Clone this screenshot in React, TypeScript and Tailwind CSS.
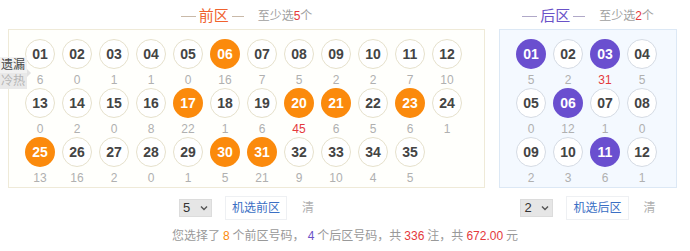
const front: [string, number, boolean][] = [
  ["01", 6, false], ["02", 0, false], ["03", 1, false], ["04", 1, false], ["05", 0, false], ["06", 16, true],
  ["07", 7, false], ["08", 5, false], ["09", 2, false], ["10", 2, false], ["11", 7, false], ["12", 10, false],
  ["13", 0, false], ["14", 2, false], ["15", 0, false], ["16", 8, false], ["17", 22, true], ["18", 1, false],
  ["19", 6, false], ["20", 45, true], ["21", 6, true], ["22", 5, false], ["23", 6, true], ["24", 1, false],
  ["25", 13, true], ["26", 16, false], ["27", 2, false], ["28", 0, false], ["29", 1, false], ["30", 5, true],
  ["31", 21, true], ["32", 9, false], ["33", 10, false], ["34", 4, false], ["35", 5, false],
];

const back: [string, number, boolean][] = [
  ["01", 5, true], ["02", 2, false], ["03", 31, true], ["04", 5, false],
  ["05", 0, false], ["06", 12, true], ["07", 1, false], ["08", 0, false],
  ["09", 2, false], ["10", 3, false], ["11", 6, true], ["12", 1, false],
];

const font = "font-['Liberation_Sans','Noto_Sans_CJK_SC',sans-serif]";

function Ball({ num, miss, on, kind }: { num: string; miss: number; on: boolean; kind: "front" | "back" }) {
  const onCls = kind === "front" ? "bg-[#fb8a0c] text-white" : "bg-[#6a4fcf] text-white";
  const offCls =
    kind === "front"
      ? "bg-white border border-[#e6e1cc] text-[#444]"
      : "bg-white border border-[#d5dbe4] text-[#444]";
  return (
    <div className="flex flex-col items-center">
      <div
        className={`w-[30px] h-[30px] rounded-full flex items-center justify-center text-[14px] font-bold ${
          on ? onCls : offCls
        }`}
      >
        {num}
      </div>
      <div
        className={`h-[19px] pt-[3px] leading-[16px] text-[12px] ${
          miss > 30 ? "text-[#e4393c]" : "text-[#b0b0b0]"
        }`}
      >
        {miss}
      </div>
    </div>
  );
}

function Title({ name, min, color, line }: { name: string; min: number; color: string; line: string }) {
  return (
    <div className="h-[29px] pt-[3px] flex items-center justify-center">
      <span className={`w-[15px] h-px ${line}`} />
      <span className={`mx-[3px] text-[15px] ${color}`}>{name}</span>
      <span className={`w-[12px] h-px ${line}`} />
      <span className="ml-[14px] text-[12px] text-[#a0a0a0]">
        至少选<span className="text-[#e4393c]">{min}</span>个
      </span>
    </div>
  );
}

function Controls({ value, label }: { value: number; label: string }) {
  return (
    <div className="mt-[8px] h-[24px] flex items-center justify-center">
      <div className="w-[33px] h-[18px] bg-[#e6e6e6] border border-[#dcdcdc] flex items-center justify-between px-[3px] text-[13px] text-[#333]">
        <span>{value}</span>
        <svg width="8" height="6" viewBox="0 0 8 6">
          <path d="M1 1.5 L4 4.5 L7 1.5" fill="none" stroke="#555" strokeWidth="1.4" />
        </svg>
      </div>
      <div className="ml-[13px] h-[24px] px-[6px] bg-white border border-[#eef0f3] flex items-center text-[12px] text-[#3a6fc4]">
        {label}
      </div>
      <div className="ml-[15px] text-[12px] text-[#b0b0b0]">清</div>
    </div>
  );
}

export default function App() {
  return (
    <div className={`relative w-[690px] h-[251px] bg-white overflow-hidden ${font}`}>
      <div className="flex pl-[8px] gap-[14px]">
        {/* 前区 */}
        <div className="w-[477px]">
          <Title name="前区" min={5} color="text-[#f0622e]" line="bg-[#c9b9a8]" />
          <div className="h-[159px] border border-[#efead8] bg-[#fffffc] pl-[16px] pt-[9px]">
            <div className="grid grid-cols-[repeat(12,30px)] gap-x-[7px]">
              {front.map(([n, m, on]) => (
                <Ball key={n} num={n} miss={m} on={on} kind="front" />
              ))}
            </div>
          </div>
          <Controls value={5} label="机选前区" />
        </div>

        {/* 后区 */}
        <div className="w-[178px]">
          <Title name="后区" min={2} color="text-[#6a52c8]" line="bg-[#b0a8c8]" />
          <div className="h-[159px] border border-[#dce8f5] bg-[#f4f9ff] pl-[16px] pt-[9px]">
            <div className="grid grid-cols-[repeat(4,30px)] gap-x-[7px]">
              {back.map(([n, m, on]) => (
                <Ball key={n} num={n} miss={m} on={on} kind="back" />
              ))}
            </div>
          </div>
          <Controls value={2} label="机选后区" />
        </div>
      </div>

      <div className="mt-[6px] h-[20px] flex items-center justify-center text-[12px] text-[#999]">
        您选择了 <span className="text-[#fb8a0c] mx-[3px]">8</span> 个前区号码，
        <span className="text-[#6a52c8] mx-[3px]">4</span> 个后区号码，共
        <span className="text-[#e4393c] mx-[3px]">336</span> 注，共
        <span className="text-[#e4393c] mx-[3px]">672.00</span> 元
      </div>

      {/* side tab */}
      <div className="absolute left-0 top-[57px] w-[27px] text-[12px]">
        <div className="relative h-[16px] leading-[16px] pl-[1px] bg-[#f2f2f2] text-[#444]">
          遗漏
          <span className="absolute right-[-4px] top-[12px] w-0 h-0 border-l-[4px] border-l-[#e2e2e2] border-y-[4px] border-y-transparent" />
        </div>
        <div className="h-[16px] leading-[16px] pl-[1px] bg-[#e9e9e9] text-[#b5b5b5]">冷热</div>
      </div>
    </div>
  );
}
